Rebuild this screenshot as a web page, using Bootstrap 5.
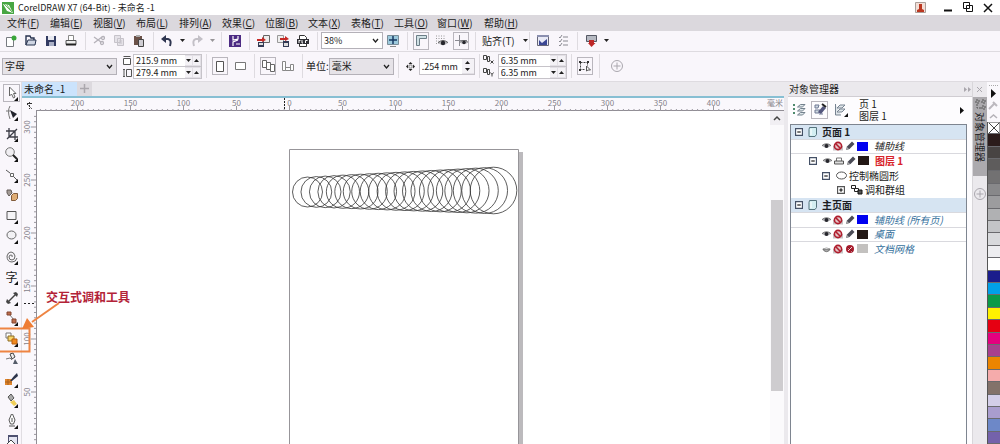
<!DOCTYPE html>
<html lang="zh-CN">
<head>
<meta charset="utf-8">
<meta name="viewport" content="width=device-width, initial-scale=1">
<title>CorelDRAW X7 (64-Bit) - 未命名 -1</title>
<link href="https://cdn.jsdelivr.net/npm/bootstrap@5.3.0/dist/css/bootstrap.min.css" rel="stylesheet">
<style>
body{font-family:"Noto Sans CJK SC",sans-serif;font-size:10px;line-height:14px;color:#1c1c22;background:#fff}
svg{display:block;flex:none}
button,input,select{font:inherit;color:inherit}
.titlebar{height:15px;padding:0 2px;font-size:9px}
.menubar{height:16px;background:#dbd8dd;padding-left:7px;gap:13px}
.menubar a{color:#1c1c22;text-decoration:none;white-space:nowrap;width:30px}
.menubar a.wide{width:34px}
.toolrow{background:#f9f6fb;border-bottom:1px solid #dedbe0}
.toolrow.std{height:22px;padding-left:1px}
.toolrow.props{height:30px}
.tb{width:20px;height:18px;padding:0;border:0;background:none;display:flex;align-items:center;justify-content:center;flex:none}
.tb.on::before{content:"";position:absolute;inset:0 2px;border:1px solid #b9b6bd}
.tb.on{position:relative}
.tb.drop{width:10px}
.tb.snap{width:42px;padding-left:3px;justify-content:flex-start;white-space:nowrap}
.vsep{width:1px;height:18px;background:#dedbe0;margin:0 3px 0 4px;flex:none}
.props .vsep{height:24px}
.pick{appearance:none;border:1px solid #b4b1b8;border-radius:0;padding:0 14px 0 2px;height:17px;line-height:14px;background:#e6e3e8 url("data:image/svg+xml,%3Csvg xmlns='http://www.w3.org/2000/svg' width='7' height='5'%3E%3Cpath d='M1 1l2.500 3 2.500-3' fill='none' stroke='%23222' stroke-width='1.300'/%3E%3C/svg%3E") no-repeat right 3px center}
.preset{width:115px;margin-left:2px}.units{width:65px}.zoomlevel{width:62px;background-color:#fff;font-size:9px}
.iconcol{width:12px}.iconcol.wide{width:15px}
.numbox{border:1px solid #c6c3c9;background:#e3e0e6;width:69px;font-size:9px}
.numbox.single{width:56px}
.numbox input{border:0;padding:0 0 0 2px;background:#fff;min-width:0;flex:1 1 0;height:11px;line-height:11px}
.numbox.single input{height:15px}
.numbox .line+.line{border-top:1px solid #c6c3c9}
.spin{width:7px;padding:0;border:0;background:#f4f2f6;height:9px;display:flex;align-items:center;justify-content:center;margin-right:1px}
.single .spin{width:12px;height:7px;margin:0}
.toolbox{width:22px;background:#f9f6fb;display:grid;grid-auto-rows:20px 21px;align-content:start;padding-top:1px;border-right:1px solid #e0dde2}
.tool{width:21px;height:20px;padding:0 0 0 2px;border:0;background:none;position:relative;display:flex;align-items:center;justify-content:center}
.tool.fly::after{content:"";position:absolute;right:3px;bottom:2px;border-left:4px solid transparent;border-bottom:4px solid #111}
.tool.sel::before{content:"";position:absolute;inset:1px 1px 1px 3px;border:1px solid #b9b6bd}
.glyph{font-size:12px}
.doctabs{height:16px;background:#ebe9ed;border-bottom:2px solid #87bfd3}
.doctab{width:55px;background:#cbe3fc;border:0;padding:0 0 0 2px;text-align:left;line-height:14px;white-space:nowrap}
.addtab{width:15px;background:#dcd9de;border:0;padding:0;display:flex;align-items:center;justify-content:center}
.hruler{height:13px;background:#faf8fc}
.vruler{width:14px;background:#faf8fc}
.rul text{font:8px "Noto Sans CJK SC",sans-serif;fill:#85828a}
.corner{width:14px;background:#faf8fc}
.vscroll{width:14px;background:#fbfafc}
.vscroll button{height:14px;border:0;padding:0;background:#f1eff3}
.thumb{height:191px;margin:75px 1px 0;background:#cecccf}
.docker{width:188px;background:#fdfcfe;border-left:4px solid #ebe9ed}
.dockhead{height:15px;background:#ebe9ed;padding-left:1px;border-bottom:1px solid #d0cdd2}
.docktools{height:27px}
.docktools .tb{width:21px}
.pageinfo{line-height:12px}
.tree{display:grid;grid-auto-rows:15px 14px 15px;align-content:start;border:1px solid #7e8590;border-bottom:0;margin:0 5px 0 2px;background:#fff}
.trow{display:flex;align-items:center;white-space:nowrap;gap:2px;border-bottom:1px solid #d9d9de}
.trow.open{border-color:#fff}
.trow.group{background:#d6e4f2}
.trow.group span{font-weight:700}
.pad1{padding-left:4px;gap:5px}.pad2{padding-left:18px}.pad3{padding-left:31px}.pad4{padding-left:46px}
.master{color:#34709c}
.chip{width:11px;height:9px}
.guides{background:#0000f0}.ink{background:#231815}.mute{background:#c3c1bf}
.tabstrip{width:15px;background:#ebe9ed;border-left:1px solid #d8d6da}
.sidetab{height:79px;border:0;background:#acaaae;padding:2px 0 0;writing-mode:vertical-rl;text-orientation:sideways;display:flex;align-items:center;gap:2px;line-height:14px;width:14px}
.moretabs{margin-top:11px}
.palette{width:13px;background:#faf8fc}
.swatches{display:grid;grid-auto-rows:12px 13px 12px 12px 13px;border-left:1px solid #555}
.swatches button{border:0;border-bottom:1px solid #6a6a6e;padding:0}
.note{left:46px;top:207px;font-size:12px;line-height:16px;font-weight:700;color:#b32338;white-space:nowrap}
.callout{left:0;top:216px}
</style>
</head>
<body class="vh-100 d-flex flex-column overflow-hidden">

<svg width="0" height="0" class="position-absolute">
 <defs>
  <symbol id="eye" viewBox="0 0 10 8"><path d="M0 4Q5-.5 10 4Q5 8 0 4z" fill="#b7b7bb"/><path d="M0 3.600Q5-.5 10 3.600" fill="none" stroke="#555"/><circle cx="5" cy="4" r="2.200" fill="#26262c"/></symbol>
  <symbol id="eyeoff" viewBox="0 0 10 8"><path d="M1 4h8Q8 7 5 7T1 4z" fill="#aaa" stroke="#555" stroke-width=".8"/><path d="M1 4Q5 1.500 9 4" fill="#eee" stroke="#888" stroke-width=".7"/></symbol>
  <symbol id="noprint" viewBox="0 0 10 10"><path d="M0 9.500V5h10v4.500z" fill="#c9c4c6"/><circle cx="5" cy="5" r="3.600" fill="#e5c5c7" stroke="#b01e2e" stroke-width="1.600"/><path d="M2.500 2.500l5 5" stroke="#b01e2e" stroke-width="1.600"/></symbol>
  <symbol id="noedit" viewBox="0 0 10 10"><circle cx="5" cy="5" r="4" fill="#a81c2d"/><path d="M3 7l4-4M3 4h1M6 7h1" stroke="#f1d5d8"/><path d="M2.500 2.500l5 5" stroke="#7d1220"/></symbol>
  <symbol id="printer" viewBox="0 0 10 10"><path d="M2.500 5V2h5v3" fill="#fff" stroke="#777"/><path d="M.5 5h9v3h-9z" fill="#ddd" stroke="#555"/></symbol>
  <symbol id="pencil" viewBox="0 0 10 10"><path d="M1 9l1-3.500 5-5L9.500 3l-5 5z" fill="#4a4b56"/><path d="M1 9l1-3 2 2z" fill="#aaa"/></symbol>
  <symbol id="minus" viewBox="0 0 7 7"><path d="M.5.5h6v6h-6z" fill="#fff" stroke="#445066"/><path d="M2 3.500h3" stroke="#111"/></symbol>
  <symbol id="plusb" viewBox="0 0 7 7"><path d="M.5.5h6v6h-6z" fill="#fff" stroke="#555"/><path d="M2 3.500h3M3.500 2v3" stroke="#111"/></symbol>
  <symbol id="sheet" viewBox="0 0 9 10"><path d="M1.500.5h7v7l-1.500 2h-6v-7z" fill="#d3eef2" stroke="#55737d"/><path d="M3 2v6" stroke="#fff"/></symbol>
  <symbol id="dn" viewBox="0 0 5 3"><path d="M0 0h5L2.500 3z" fill="#222"/></symbol>
  <symbol id="up" viewBox="0 0 5 3"><path d="M0 3h5L2.500 0z" fill="#222"/></symbol>
  <symbol id="layers" viewBox="0 0 14 14"><path d="M1 2h2M1 6h2M1 10h2" stroke="#4f8a6d" stroke-width="2"/><path d="M5.500 4l3-2.500H13L10.500 4zM5.500 8l3-2.500H13L10.500 8zM5.500 12l3-2.500H13L10.500 12z" fill="#dfe7ea" stroke="#73818d"/></symbol>
  <symbol id="circplus" viewBox="0 0 14 14"><circle cx="7" cy="7" r="5.500" fill="none" stroke="#aaa7ae"/><path d="M3.500 7h7M7 3.500v7" stroke="#aaa7ae"/></symbol>
 </defs>
</svg>

<header class="titlebar d-flex align-items-center">
 <svg width="12" height="12" class="me-1"><path d="M0 0h12v12H0z" fill="#47a643"/><path d="M1 2l6 1 4 8-6-2z" fill="#fff"/><path d="M2 2l8 8M5 3l5 7" stroke="#6fba64"/></svg>
 <span class="flex-grow-1">CorelDRAW X7 (64-Bit) - 未命名 -1</span>
 <button class="tb me-2" aria-label="用户"><svg width="11" height="11"><path d="M.5.5h10v10H.5z" fill="#f3ded6" stroke="#ab9f9a"/><path d="M2 10V8l2-1V2h3v5l2 1v2z" fill="#bb3720"/></svg></button>
 <button class="tb" aria-label="最小化"><svg width="9" height="9"><path d="M0 7.500h8" stroke="#111" stroke-width="2"/></svg></button>
 <button class="tb" aria-label="还原"><svg width="11" height="11"><path d="M.5.5h6v6h-6zM3.500 3.500h6v6h-6z" fill="#fff" stroke="#111"/></svg></button>
 <button class="tb" aria-label="关闭"><svg width="10" height="10"><path d="M1 1l8 8M9 1L1 9" stroke="#111" stroke-width="1.500"/></svg></button>
</header>

<nav class="menubar d-flex align-items-center">
 <a href="#">文件(<u>F</u>)</a><a href="#">编辑(<u>E</u>)</a><a href="#">视图(<u>V</u>)</a><a href="#">布局(<u>L</u>)</a><a href="#">排列(<u>A</u>)</a><a href="#">效果(<u>C</u>)</a><a href="#">位图(<u>B</u>)</a><a href="#">文本(<u>X</u>)</a><a href="#">表格(<u>T</u>)</a><a href="#">工具(<u>O</u>)</a><a href="#" class="wide">窗口(<u>W</u>)</a><a href="#">帮助(<u>H</u>)</a>
</nav>

<div class="toolrow std d-flex align-items-center">
 <button class="tb" aria-label="新建"><svg width="12" height="12"><path d="M1.500 2.500h7v9h-7z" fill="#fff" stroke="#777a80"/><circle cx="9" cy="3" r="2.500" fill="#3aa63a"/></svg></button>
 <button class="tb" aria-label="打开"><svg width="12" height="11"><path d="M1 10V1h4l1 2h3v2" fill="none" stroke="#27324f" stroke-width="1.400"/><path d="M1 10l2-5h8l-1 5z" fill="#cfd5e3" stroke="#27324f"/></svg></button>
 <button class="tb" aria-label="保存"><svg width="10" height="10"><path d="M0 0h10v10H0z" fill="#333b62"/><path d="M2 0h6v4H2z" fill="#e7e8f0"/><path d="M3 6h5v4H3z" fill="#abb0c6"/></svg></button>
 <button class="tb" aria-label="打印"><svg width="12" height="11"><path d="M3.500 5V.5h5V5" fill="#fff" stroke="#888"/><path d="M1 5.500h10v4H1z" fill="#eee" stroke="#555"/><path d="M1 9.500h10" stroke="#222" stroke-width="2"/></svg></button>
 <i class="vsep"></i>
 <button class="tb" aria-label="剪切"><svg width="12" height="11" fill="none" stroke="#b5b2b9" stroke-width="1.300"><path d="M1 2l7 5M1 8l8-6"/><circle cx="10" cy="3" r="1.500"/><circle cx="9" cy="8" r="1.500"/></svg></button>
 <button class="tb" aria-label="复制"><svg width="12" height="12" fill="#e5e2e8" stroke="#c6c3ca"><path d="M1.500.5h6v7h-6zM4.500 3.500h6v7h-6zM6 6h3M6 8h3"/></svg></button>
 <button class="tb" aria-label="粘贴"><svg width="12" height="12"><path d="M1 1h8v9H1z" fill="#6b5148"/><path d="M3 0h4v2H3z" fill="#aaa"/><path d="M5.500 4.500h5v7h-5z" fill="#cfcdd3" stroke="#444"/></svg></button>
 <i class="vsep"></i>
 <button class="tb" aria-label="撤消"><svg width="12" height="12"><path d="M5 0v8L0 4z" fill="#2e3550"/><path d="M4 4h3q4 1 2 7" fill="none" stroke="#2e3550" stroke-width="2"/></svg></button>
 <button class="tb drop" aria-label="撤消列表"><svg width="5" height="3"><use href="#dn"/></svg></button>
 <button class="tb" aria-label="重做"><svg width="12" height="12"><path d="M7 0v8l5-4z" fill="#c3c0c7"/><path d="M8 4H5q-4 1-2 7" fill="none" stroke="#c3c0c7" stroke-width="2"/></svg></button>
 <button class="tb drop" aria-label="重做列表"><svg width="5" height="3" opacity=".45"><use href="#dn"/></svg></button>
 <i class="vsep"></i>
 <button class="tb" aria-label="启动器"><svg width="12" height="12"><path d="M0 0h12v12H0z" fill="#4c2b83"/><path d="M4 1v4l5-1V1M9 5L4 7v4M7 9h4" stroke="#fff" stroke-width="1.200" fill="none"/></svg></button>
 <i class="vsep"></i>
 <button class="tb" aria-label="导入"><svg width="13" height="12"><path d="M6.500.5h6v7h-6z" fill="#eee" stroke="#666"/><path d="M1 7h6v5H1z" fill="#333b55"/><path d="M2 8h4v2H2z" fill="#ddd"/><path d="M0 4h5V2l4 3-4 2V6H0z" fill="#c62a27"/></svg></button>
 <button class="tb" aria-label="导出"><svg width="13" height="12"><path d="M.5.5h6v7h-6z" fill="#eee" stroke="#999"/><path d="M6 6h6v6H6z" fill="#333b55"/><path d="M7 8h4v3H7z" fill="#ddd"/><path d="M3 3h5V1l4 3-4 2V5H3z" fill="#c62a27"/></svg></button>
 <button class="tb" aria-label="发布为PDF"><svg width="12" height="12"><path d="M2.500 4V.5h5l2 2V4M2.500 9v2.500h7V9" fill="#fff" stroke="#333"/><path d="M0 4h12v5H0z" fill="#2f2f35"/><path d="M2 5v3M2 5.500h1.500M5 5v3h1M8.500 8V5.500h2" stroke="#fff" fill="none"/></svg></button>
 <i class="vsep"></i>
 <select class="pick zoomlevel" aria-label="缩放级别"><option>38%</option></select>
 <button class="tb" aria-label="全屏预览"><svg width="12" height="12"><path d="M.5.5h11v9H.5z" fill="#9cc9dc" stroke="#7a8d98"/><path d="M6 1v8M2 5h8" stroke="#173a63" stroke-width="1.500"/><path d="M3 11.500h6" stroke="#888"/></svg></button>
 <i class="vsep"></i>
 <button class="tb on" aria-label="显示标尺"><svg width="11" height="11"><path d="M.5.5h10v3h-7v7h-3z" fill="#cfe0e4" stroke="#6b7d86"/></svg></button>
 <button class="tb" aria-label="显示网格"><svg width="13" height="12"><path d="M1 1h10M1 3.500h10M1 6h3M1 8.500h3" stroke="#999" stroke-dasharray="1 1.500"/><use href="#eye" x="3" y="4" width="10" height="8"/></svg></button>
 <button class="tb on" aria-label="显示辅助线"><svg width="13" height="12"><path d="M0 5.500h12M4.500 0v11" stroke="#8b8b92"/><use href="#eye" x="5" y="4" width="8" height="7"/></svg></button>
 <i class="vsep"></i>
 <button class="tb snap">贴齐(T)<svg width="5" height="3" class="ms-2"><use href="#dn"/></svg></button>
 <i class="vsep ms-2"></i>
 <button class="tb" aria-label="欢迎屏幕"><svg width="12" height="11"><path d="M.5.5h11v10H.5z" fill="#e9eaf6" stroke="#667"/><path d="M0 1h12" stroke="#8c90b0" stroke-width="2"/><path d="M2 10V5l3 3 5-4v6z" fill="#3b4794"/></svg></button>
 <button class="tb" aria-label="选项"><svg width="11" height="12" fill="none" stroke="#898990"><path d="M1 2l1 1 2-3M5 2h5M1 6l1 1 2-3M5 6h5M1 10l1 1 2-3M5 10h5"/></svg></button>
 <i class="vsep"></i>
 <button class="tb" aria-label="应用程序启动器"><svg width="11" height="12"><path d="M.5.5h10v6H.5z" fill="#b6b9c2" stroke="#555864"/><path d="M3 5h5v3h1.500L5.500 12 2 8h1z" fill="#bd2727"/></svg></button>
 <button class="tb drop" aria-label="启动器列表"><svg width="5" height="3"><use href="#dn"/></svg></button>
</div>

<div class="toolrow props d-flex align-items-center">
 <select class="pick preset" aria-label="页面大小"><option>字母</option></select>
 <div class="iconcol ms-1 d-flex flex-column align-items-center gap-1">
  <svg width="8" height="9"><path d="M.5 2.500h7v6h-7zM.5.5h7" fill="#fff" stroke="#555"/></svg>
  <svg width="10" height="8"><path d="M1 .5h2M2 .5v7M1 7.500h2M4.500.5h5v7h-5z" fill="none" stroke="#555"/></svg>
 </div>
 <div class="numbox">
  <div class="line d-flex align-items-center"><input type="text" value="215.9 mm" aria-label="页面宽度"><button class="spin" aria-label="减小"><svg width="5" height="3"><use href="#dn"/></svg></button><button class="spin" aria-label="增大"><svg width="5" height="3"><use href="#up"/></svg></button></div>
  <div class="line d-flex align-items-center"><input type="text" value="279.4 mm" aria-label="页面高度"><button class="spin" aria-label="减小"><svg width="5" height="3"><use href="#dn"/></svg></button><button class="spin" aria-label="增大"><svg width="5" height="3"><use href="#up"/></svg></button></div>
 </div>
 <i class="vsep"></i>
 <button class="tb on" aria-label="纵向"><svg width="8" height="11"><path d="M.5.5h7v10h-7z" fill="#fff" stroke="#555"/></svg></button>
 <button class="tb" aria-label="横向"><svg width="11" height="8"><path d="M.5.5h10v7H.5z" fill="#fff" stroke="#777"/></svg></button>
 <i class="vsep"></i>
 <button class="tb on" aria-label="所有页面"><svg width="13" height="12"><path d="M.5.5h4v7h-4zM4.500 2.500h4v7h-4zM8.500 4.500h4v7h-4z" fill="#fff" stroke="#666"/></svg></button>
 <button class="tb" aria-label="当前页"><svg width="13" height="11"><path d="M.5.5h3v9h-3zM3.500 6.500h5v3h-5zM8.500 3.500h3v6h-3z" fill="#fff" stroke="#888"/></svg></button>
 <i class="vsep"></i>
 <label for="units" class="text-nowrap">单位:</label>
 <select id="units" class="pick units"><option>毫米</option></select>
 <i class="vsep"></i>
 <svg width="9" height="9" class="mx-1"><path d="M4.500 0l2 2h-4zM4.500 9l2-2h-4zM0 4.500l2-2v4zM9 4.500l-2-2v4z" fill="#222"/><path d="M3 3h3v3H3z" fill="none" stroke="#888"/></svg>
 <div class="numbox single d-flex align-items-center"><input type="text" value=".254 mm" aria-label="微调距离"><span class="d-flex flex-column"><button class="spin" aria-label="增大"><svg width="5" height="3"><use href="#up"/></svg></button><button class="spin" aria-label="减小"><svg width="5" height="3"><use href="#dn"/></svg></button></span></div>
 <i class="vsep"></i>
 <div class="iconcol wide d-flex flex-column gap-1">
  <svg width="12" height="9"><path d="M.5.5h3v4h-3zM4.500 1.500h2v5h-2zM7.500 5.500l3 3M10.500 5.500l-3 3" fill="none" stroke="#444"/></svg>
  <svg width="12" height="9"><path d="M.5.5h3v4h-3zM4.500 1.500h2v5h-2zM7.500 4.500l1.500 2 1.500-2M9 6.500v2" fill="none" stroke="#444"/></svg>
 </div>
 <div class="numbox">
  <div class="line d-flex align-items-center"><input type="text" value="6.35 mm" aria-label="再制距离 X"><button class="spin" aria-label="减小"><svg width="5" height="3"><use href="#dn"/></svg></button><button class="spin" aria-label="增大"><svg width="5" height="3"><use href="#up"/></svg></button></div>
  <div class="line d-flex align-items-center"><input type="text" value="6.35 mm" aria-label="再制距离 Y"><button class="spin" aria-label="减小"><svg width="5" height="3"><use href="#dn"/></svg></button><button class="spin" aria-label="增大"><svg width="5" height="3"><use href="#up"/></svg></button></div>
 </div>
 <i class="vsep"></i>
 <button class="tb on" aria-label="视为已填充"><svg width="13" height="12"><path d="M2.500 2.500h7M2.500 2.500v7h5M9.500 2.500V6" fill="none" stroke="#444" stroke-dasharray="2 1"/><path d="M1 1h2v2H1zM9 1h2v2H9zM1 9h2v2H1z" fill="#333"/><path d="M8.500 6v5l1.500-1 2.500 0z" fill="#fff" stroke="#555"/></svg></button>
 <i class="vsep"></i>
 <button class="tb ms-1" aria-label="快速自定义"><svg width="14" height="14"><use href="#circplus"/></svg></button>
</div>

<main class="flex-grow-1 d-flex position-relative" style="min-height:0">
 <div class="toolbox flex-shrink-0 overflow-hidden">
  <button class="tool sel fly" aria-label="选择"><svg width="10" height="13"><path d="M2.500 1v9l2-2 2 4 1.500-1L6.500 7.500H9z" fill="#fff" stroke="#666"/></svg></button>
  <button class="tool fly" aria-label="形状"><svg width="13" height="13"><path d="M5 0Q2 5 5 13M1 5h4" fill="none" stroke="#777"/><path d="M5 4l7 4-4 4z" fill="#22232c"/></svg></button>
  <button class="tool fly" aria-label="裁剪"><svg width="12" height="12"><path d="M3 0v9h9M0 3h9v9M1 11L11 1" fill="none" stroke="#3c3d47" stroke-width="1.300"/></svg></button>
  <button class="tool fly" aria-label="缩放"><svg width="13" height="13"><circle cx="5" cy="5" r="4.300" fill="#f0eef2" stroke="#777"/><path d="M8 8l4 4" stroke="#222" stroke-width="2"/></svg></button>
  <button class="tool fly" aria-label="手绘"><svg width="12" height="12"><path d="M0 1l4 3M7 7l4 4" stroke="#555"/><path d="M4.500 4.500h3v3h-3z" fill="#fff" stroke="#666"/></svg></button>
  <button class="tool" aria-label="智能填充"><svg width="12" height="12"><path d="M1 1h4l1 3-3 3-2-3z" fill="#a39b96" stroke="#645d59"/><path d="M5.500 6.500l2-2h4v5l-2 2h-4z" fill="#e0ad75" stroke="#815b3b"/></svg></button>
  <button class="tool fly" aria-label="矩形"><svg width="11" height="11"><path d="M1 1.500h9v8H1z" fill="#f4f3f6" stroke="#555"/></svg></button>
  <button class="tool fly" aria-label="椭圆形"><svg width="12" height="11"><ellipse cx="5.500" cy="5" rx="4.500" ry="4" fill="#f2f1f4" stroke="#666"/></svg></button>
  <button class="tool fly" aria-label="螺纹"><svg width="12" height="12"><path d="M6 6q1-2-1-2T3 6q0 3 3 3t3-4Q8 1 5 1T1 5q0 6 5 6 4 0 5-4" fill="none" stroke="#666"/></svg></button>
  <button class="tool fly glyph" aria-label="文本">字</button>
  <button class="tool fly" aria-label="平行度量"><svg width="12" height="12"><path d="M2 10l8-8" stroke="#444" stroke-width="1.500"/><path d="M1 7l4 4-3 1-2-2zM7 1l3-1 2 2-1 3z" fill="#444"/></svg></button>
  <button class="tool fly" aria-label="连接器"><svg width="12" height="13"><path d="M3 3l6 7" stroke="#777"/><path d="M1 1h4v3H1zM6 8h4v4H6z" fill="#bd6e4c" stroke="#81452e"/></svg></button>
  <button class="tool fly" aria-label="调和"><svg width="13" height="13"><path d="M1 1h5v5H1z" fill="#fff" stroke="#777"/><path d="M3 4h6v5H3z" fill="#f7d46a" stroke="#8c6b25"/><path d="M7 7h5v5H7z" fill="#f08a20" stroke="#b85a0c"/></svg></button>
  <button class="tool" aria-label="透明度"><svg width="13" height="13"><path d="M1 7l4-1 2 2" fill="none" stroke="#777"/><path d="M5 2l3-1 2 4-3 2z" fill="#eee" stroke="#444"/><path d="M10 7l3 5H8z" fill="#555c69"/></svg></button>
  <button class="tool fly" aria-label="颜色滴管"><svg width="13" height="13"><path d="M0 6h7v6H0z" fill="#e0852b"/><path d="M3 6v6M0 9h7" stroke="#a9601e"/><path d="M5 8l4-5 3-3 1 3-6 5z" fill="#2d344a"/></svg></button>
  <button class="tool fly" aria-label="交互式填充"><svg width="12" height="13"><path d="M2 4l3-3 3 4-3 3z" fill="#aaa" stroke="#555"/><path d="M4 9l4-2 3 4-3 2z" fill="#f0cf57"/></svg></button>
  <button class="tool fly" aria-label="轮廓笔"><svg width="10" height="13"><path d="M4.500 0L2 6l1.500 4h3L8 6 5.500 0zM2 12h6M5 4v4" fill="#fff" stroke="#555"/></svg></button>
  <button class="tool" aria-label="编辑填充"><svg width="12" height="12"><path d="M2.500.5h9v9h-9z" fill="#e4e5f2" stroke="#4d5070"/><path d="M2 1h10" stroke="#4d5070" stroke-width="2"/><path d="M1 9l4-4 4 4-3 3z" fill="#fff" stroke="#444"/></svg></button>
 </div>

 <section class="flex-grow-1 d-flex flex-column" style="min-width:0">
  <div class="doctabs d-flex flex-shrink-0"><button class="doctab">未命名 -1</button><button class="addtab" aria-label="新建文档"><svg width="9" height="9"><path d="M0 4.500h9M4.500 0v9" stroke="#aaa7ad" stroke-width="1.500"/></svg></button></div>
  <div class="d-flex flex-shrink-0 hruler">
   <div class="corner"><svg width="13" height="13"><path d="M5 5.500h6M7.500 4v7M5 6l5 5" stroke="#333" stroke-dasharray="2 1"/></svg></div>
   <svg id="hr" class="rul flex-grow-1" height="13" style="width:0"></svg>
  </div>
  <div class="flex-grow-1 d-flex" style="min-height:0">
   <svg id="vr" class="rul vruler h-100" width="14"></svg>
   <svg id="sheetview" class="flex-grow-1 h-100 bg-white" style="width:0">
    <path d="M0 0v600" stroke="#918e95" stroke-width="2"/>
    <path d="M483 41h4v500h-4z" fill="#bcbabd"/>
    <path d="M253.500 38.500h229v500h-229z" fill="#fff" stroke="#979599"/>
    <g id="blend" fill="none" stroke="#333" stroke-width=".8"></g>
   </svg>
   <div class="vscroll d-flex flex-column flex-shrink-0"><button aria-label="向上滚动"><svg width="14" height="12"><path d="M4 8l3-3 3 3" fill="none" stroke="#444" stroke-width="1.500"/></svg></button><div class="thumb"></div></div>
  </div>
 </section>

 <aside class="docker flex-shrink-0 d-flex flex-column overflow-hidden">
  <div class="dockhead d-flex align-items-center flex-shrink-0"><span>对象管理器</span></div>
  <div class="docktools d-flex align-items-center flex-shrink-0">
   <button class="tb" aria-label="显示对象属性"><svg width="14" height="14"><use href="#layers"/></svg></button>
   <button class="tb on" aria-label="跨图层编辑"><svg width="14" height="14"><path d="M2 2h4l-1 3H2zM2 7h5l-1 3H2zM6 11h4" fill="#cdd7df" stroke="#6e7994"/><path d="M5 9l5-6 3 2-5 6z" fill="#54577e"/><path d="M9 1l4 3" stroke="#222" stroke-width="2"/></svg></button>
   <button class="tb" aria-label="图层管理器视图"><svg width="14" height="14"><path d="M1.500 1v11H7M3 5l3-3h5L8 5zM3 9l3-3h5L8 9z" fill="#e0e6ea" stroke="#768391"/><path d="M14 10v4h-4z" fill="#111"/></svg></button>
   <div class="pageinfo flex-grow-1 ms-2">页 1<br>图层 1</div>
   <svg width="4" height="7" class="me-2"><path d="M0 0l4 3.500L0 7z" fill="#111"/></svg>
  </div>
  <div class="tree flex-grow-1">
   <div class="trow group pad1"><svg width="8" height="8"><use href="#minus"/></svg><svg width="9" height="10"><use href="#sheet"/></svg><span>页面 1</span></div>
   <div class="trow pad3"><svg width="9" height="8"><use href="#eye"/></svg><svg width="10" height="10"><use href="#noprint"/></svg><svg width="10" height="10"><use href="#pencil"/></svg><b class="chip guides"></b><em class="ms-1">辅助线</em></div>
   <div class="trow open pad2"><svg width="8" height="8" class="me-1"><use href="#minus"/></svg><svg width="9" height="8"><use href="#eye"/></svg><svg width="10" height="10"><use href="#printer"/></svg><svg width="10" height="10"><use href="#pencil"/></svg><b class="chip ink"></b><b class="ms-1" style="color:#d8232a">图层 1</b></div>
   <div class="trow open pad3"><svg width="8" height="8" class="me-1"><use href="#minus"/></svg><svg width="11" height="9"><ellipse cx="5.500" cy="4.500" rx="5" ry="3.500" fill="#fff" stroke="#555"/></svg>控制椭圆形</div>
   <div class="trow open pad4"><svg width="8" height="8" class="me-1"><use href="#plusb"/></svg><svg width="12" height="10"><path d="M.5.5h4v3h-4zM3.500 3.500h4v3h-4z" fill="#fff" stroke="#222"/><path d="M7 5h4v4H7z" fill="#555" stroke="#111"/></svg>调和群组</div>
   <div class="trow group pad1"><svg width="8" height="8"><use href="#minus"/></svg><svg width="9" height="10"><use href="#sheet"/></svg><span>主页面</span></div>
   <div class="trow pad3"><svg width="9" height="8"><use href="#eye"/></svg><svg width="10" height="10"><use href="#noprint"/></svg><svg width="10" height="10"><use href="#pencil"/></svg><b class="chip guides"></b><em class="ms-1 master">辅助线 (所有页)</em></div>
   <div class="trow pad3"><svg width="9" height="8"><use href="#eye"/></svg><svg width="10" height="10"><use href="#noprint"/></svg><svg width="10" height="10"><use href="#pencil"/></svg><b class="chip ink"></b><em class="ms-1 master">桌面</em></div>
   <div class="trow open pad3"><svg width="9" height="8"><use href="#eyeoff"/></svg><svg width="10" height="10"><use href="#noprint"/></svg><svg width="10" height="10"><use href="#noedit"/></svg><b class="chip mute"></b><em class="ms-1 master">文档网格</em></div>
  </div>
 </aside>

 <div class="tabstrip flex-shrink-0 d-flex flex-column">
  <svg width="14" height="15" overflow="visible"><path d="M-9 5l3 2.500L-9 10zM-5 5l3 2.500L-5 10z" fill="#aaa7ad"/><path d="M4 5l5 5M9 5l-5 5" stroke="#aaa7ad"/></svg>
  <button class="sidetab"><svg width="11" height="11"><path d="M1 1h3v3H1zM7 1h3v3H7zM7 7h3v3H7zM2 5v4h4" fill="none" stroke="#555" stroke-dasharray="2 1"/></svg><span>对象管理器</span></button>
  <svg width="14" height="14" class="moretabs"><use href="#circplus"/></svg>
 </div>

 <div class="palette flex-shrink-0 overflow-hidden">
  <svg width="13" height="40"><path d="M2 3.500h9" stroke="#aaa" stroke-dasharray="1 1"/><path d="M4 7l5 4.500L4 16z" fill="#111"/><path d="M2 27l5-5M6 20l4 4" stroke="#bbb8be" stroke-width="2"/><path d="M3 36l3.500-3 3.500 3" fill="none" stroke="#b5b2b8" stroke-width="1.500"/></svg>
  <div id="swatches" class="swatches"><button class="bg-white d-flex" aria-label="无"><svg width="12" height="12"><path d="M0 0h12v12M1 1l10 10M11 1L1 11" fill="none" stroke="#444"/></svg></button></div>
 </div>

 <svg class="callout position-absolute pe-none" width="64" height="60"><path d="M0 30.500h29.500v23H0" fill="none" stroke="#ee8442" stroke-width="2"/><path d="M59 5L32 24" stroke="#ee8442" stroke-width="2"/><path d="M22 31l5-11 7 9z" fill="#ee7d35"/></svg>
 <span class="note position-absolute">交互式调和工具</span>
</main>

<script src="https://cdn.jsdelivr.net/npm/bootstrap@5.3.0/dist/js/bootstrap.bundle.min.js"></script>
<script>
// Colour palette, top to bottom
const colours = ['#2b1c1b','#484443','#5e5c5c','#727172','#88888a','#9c9c9e','#b0b1b3','#c3c4c7','#d8d9dc','#ededf0','#ffffff','#1b1d8c','#00a0e9','#0a9a48','#fff100','#e60012','#e4007f','#a8408e','#ec8500','#f5abab','#83726a','#d3cee8','#a99dce','#6d88c8','#7462ab'];
document.getElementById('swatches').insertAdjacentHTML('beforeend', colours.map(c => `<button aria-label="${c}" style="background:${c}"></button>`).join(''));

// Rulers: 50 mm is 53 px on screen, with a tick every 5 mm
const STEP = 5.3;
let h = '<path d="M0 12.500h2000" stroke="#918e95"/>', v = '';
for (let i = -47; i < 90; i++) {
  const x = 253.5 + i * STEP, major = i % 10 === 0;
  h += `<path d="M${x} ${major ? 8 : 11}V13" stroke="#9a979e"/>`;
  if (major && i <= 80) h += `<text x="${x}" y="8" text-anchor="middle">${Math.abs(i * 5)}</text>`;
}
h += '<text x="731" y="8">毫米</text><path d="M248.500 0v12" stroke="#222" stroke-dasharray="2 1"/>';
for (let i = 62; i > 0; i--) {
  const y = 16 + (60 - i) * STEP, major = i % 10 === 0;
  v += `<path d="M${major ? 9 : 12} ${y}H14" stroke="#9a979e"/>`;
  if (major) v += `<text text-anchor="middle" transform="translate(8 ${y}) rotate(-90)">${i * 5}</text>`;
}
v += '<path d="M2 192.500h11" stroke="#222" stroke-dasharray="2 2"/>';
document.getElementById('hr').innerHTML = h;
document.getElementById('vr').innerHTML = v;

// Blend from the small circle to the large one
let b = '';
for (let i = 0; i < 22; i++) {
  const t = i / 21;
  b += `<circle cx="${271.5 + t * 186}" cy="${81 - t * 1.5}" r="${15 + t * 8.3}"/>`;
}
document.getElementById('blend').innerHTML = b;
</script>
</body>
</html>
